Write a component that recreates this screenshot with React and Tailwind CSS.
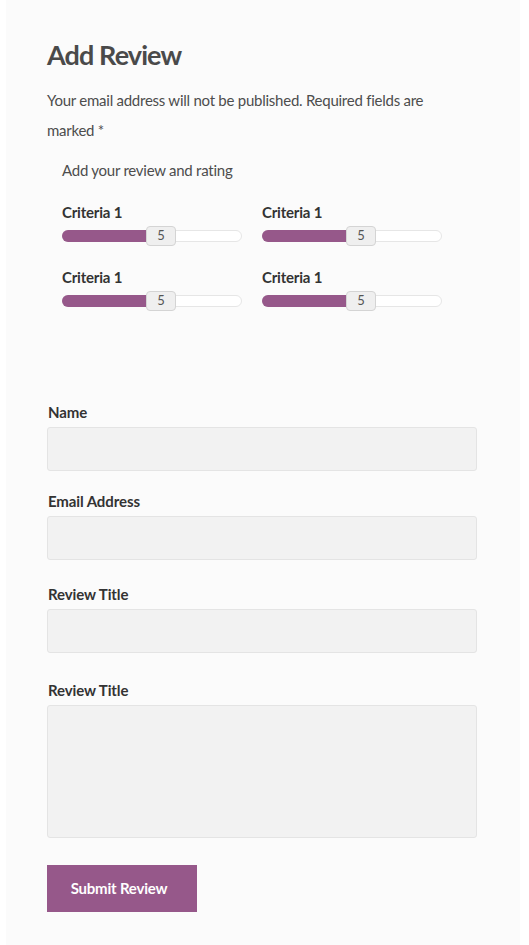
import React from 'react';

const PURPLE = 'bg-[#96588a]';

function Criteria({ label = 'Criteria 1', value = 5 }) {
  return (
    <div className="w-[180px]">
      <div className="text-[15px] leading-[20px] font-bold tracking-[-0.2px] text-[#333]">{label}</div>
      <div className="relative mt-[8px] h-[12px] w-[180px] rounded-full border border-[#e6e6e6] bg-white">
        <div className={`absolute -left-px -top-px h-[12px] w-[100px] rounded-l-full ${PURPLE}`} />
        <div className="absolute left-[83px] top-[-5px] flex h-[20px] w-[30px] items-center justify-center rounded-[4px] border border-[#d4d4d4] bg-[#efefef] text-[13px] text-[#555]">
          {value}
        </div>
      </div>
    </div>
  );
}

function Field({ label, tall, className = '' }) {
  return (
    <div className={className}>
      <label className="block pl-px text-[15px] leading-[20px] font-bold tracking-[-0.1px] text-[#333]">{label}</label>
      {tall ? (
        <textarea className="mt-[5px] block h-[133px] w-full resize-none rounded-[3px] border border-[#e4e4e4] bg-[#f2f2f2]" />
      ) : (
        <input className="mt-[5px] block h-[44px] w-full rounded-[3px] border border-[#e4e4e4] bg-[#f2f2f2]" />
      )}
    </div>
  );
}

export default function App() {
  return (
    <div className="min-h-screen bg-white font-['Lato','Liberation_Sans',sans-serif]">
      <div className="ml-[6px] w-[514px] bg-[#fbfbfb] pl-[41px] pr-[43px] pt-[38px] pb-[33px]">
        <h2 className="text-[27px] leading-[34px] font-bold tracking-[-0.9px] text-[#4a4a4a]">Add Review</h2>
        <p className="mt-[13px] max-w-[410px] text-[15px] leading-[30px] tracking-[-0.25px] text-[#4d4d4d]">
          {'Your email address will not be published. Required fields are marked *'}
        </p>

        <div className="pl-[15px]">
          <div className="mt-[15px] text-[15px] leading-[20px] tracking-[-0.25px] text-[#4d4d4d]">Add your review and rating</div>
          <div className="mt-[22px] grid w-[380px] grid-cols-2 gap-x-[20px] gap-y-[25px]">
            <Criteria />
            <Criteria />
            <Criteria />
            <Criteria />
          </div>
        </div>

        <form className="mt-[95px]" onSubmit={(e) => e.preventDefault()}>
          <Field label="Name" />
          <Field label="Email Address" className="mt-[20px]" />
          <Field label="Review Title" className="mt-[24px]" />
          <Field label="Review Title" tall className="mt-[27px]" />
          <button
            type="submit"
            className={`mt-[27px] h-[47px] w-[150px] pr-[6px] ${PURPLE} text-[15px] font-bold tracking-[-0.2px] text-white`}
          >
            Submit Review
          </button>
        </form>
      </div>
    </div>
  );
}
